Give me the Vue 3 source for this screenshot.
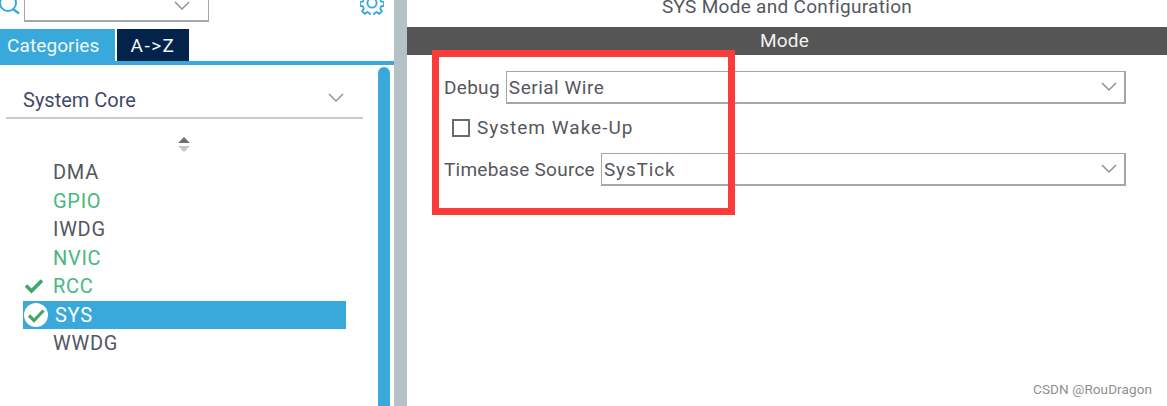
<template>
  <div class="page">
    <aside class="side">
      <div class="search-row">
        <svg class="search-icon" width="21" height="15" viewBox="0 0 21 15">
          <circle cx="8" cy="3" r="8" fill="none" stroke="#39a9dc" stroke-width="2" />
          <path d="M13 9l6 4.5" stroke="#39a9dc" stroke-width="2.400" fill="none" />
        </svg>
        <div class="search-box">
          <svg width="16" height="10" viewBox="0 0 16 10"><path d="M1 1l7 7 7-7" fill="none" stroke="#8d9296" stroke-width="1.500" /></svg>
        </div>
        <svg class="gear" width="24" height="24" viewBox="0 0 26 26">
          <circle cx="13" cy="13" r="5" fill="none" stroke="#39a9dc" stroke-width="2" />
          <path d="M11 2h4l.7 3.200 2.400 1 2.800-1.800 2.800 2.800-1.800 2.800 1 2.400 3.100.6v4l-3.100.7-1 2.400 1.800 2.800-2.800 2.800-2.800-1.800-2.400 1-.7 3.100h-4l-.7-3.100-2.400-1-2.800 1.800-2.800-2.800 1.800-2.800-1-2.400-3.100-.7v-4l3.100-.6 1-2.400-1.800-2.800 2.800-2.800 2.800 1.800 2.400-1z" transform="translate(0 -1)" fill="none" stroke="#39a9dc" stroke-width="2" />
        </svg>
      </div>
      <div class="tabs">
        <div class="tab active">Categories</div>
        <div class="tab dark">A-&gt;Z</div>
      </div>
      <div class="side-body">
        <div class="tree">
          <div class="group">
            <span>System Core</span>
            <svg width="16" height="10" viewBox="0 0 16 10"><path d="M1 1l7 7 7-7" fill="none" stroke="#8d9296" stroke-width="1.500" /></svg>
          </div>
          <div class="sorter">
            <svg width="14" height="16" viewBox="0 0 14 16">
              <path d="M7 0l6 6H1z" fill="#6f7173" />
              <path d="M1 9h12l-6 6z" fill="#c4c6c8" />
            </svg>
          </div>
          <ul class="items">
            <li
              v-for="item in items"
              :key="item.name"
              :class="['item', item.state]"
            >
              <span class="mark">
                <svg v-if="item.state === 'done'" width="20" height="16" viewBox="0 0 20 16">
                  <path d="M3 7.500l5.500 5.500L19 2.500" fill="none" stroke="#3fa767" stroke-width="3.600" />
                </svg>
                <svg v-if="item.state === 'selected'" width="26" height="26" viewBox="0 0 26 26">
                  <circle cx="13" cy="13" r="12" fill="#fff" />
                  <path d="M6 13.500l5 5L20.500 8.500" fill="none" stroke="#3fa767" stroke-width="3.200" />
                </svg>
              </span>
              <span>{{ item.name }}</span>
            </li>
          </ul>
        </div>
        <div class="scrollbar"></div>
      </div>
    </aside>
    <div class="splitter"></div>
    <main class="main">
      <div class="title">SYS Mode and Configuration</div>
      <div class="mode-bar">Mode</div>
      <div class="form">
        <div class="row debug-row">
          <label>Debug</label>
          <div class="select">
            <span>Serial Wire</span>
            <svg width="16" height="10" viewBox="0 0 16 10"><path d="M1 1l7 7 7-7" fill="none" stroke="#8d9296" stroke-width="1.500" /></svg>
          </div>
        </div>
        <div class="check-row">
          <span class="check"></span>
          <span class="wake">System Wake-Up</span>
        </div>
        <div class="row">
          <label class="timebase">Timebase Source</label>
          <div class="select">
            <span class="systick">SysTick</span>
            <svg width="16" height="10" viewBox="0 0 16 10"><path d="M1 1l7 7 7-7" fill="none" stroke="#8d9296" stroke-width="1.500" /></svg>
          </div>
        </div>
      </div>
      <div class="highlight"></div>
      <div class="watermark">CSDN @RouDragon</div>
    </main>
  </div>
</template>

<script setup>
const items = [
  { name: 'DMA', state: '' },
  { name: 'GPIO', state: 'ok' },
  { name: 'IWDG', state: '' },
  { name: 'NVIC', state: 'ok' },
  { name: 'RCC', state: 'done' },
  { name: 'SYS', state: 'selected' },
  { name: 'WWDG', state: '' }
]
</script>

<style>
html, body { margin: 0; background: #fff; }
</style>

<style scoped>
.page {
  display: flex;
  width: 1167px;
  height: 406px;
  overflow: hidden;
  background: #fff;
  font-family: Roboto, "Liberation Sans", sans-serif;
  font-size: 19px;
  letter-spacing: 0.5px;
  color: #55575e;
}

.side {
  width: 394px;
  flex: none;
  display: flex;
  flex-direction: column;
}

.search-row {
  height: 29px;
  flex: none;
  display: flex;
  align-items: flex-start;
}

.search-icon {
  flex: none;
  margin-right: 3px;
}

.search-box {
  width: 185px;
  height: 22px;
  box-sizing: border-box;
  border: solid #a2a7aa;
  border-width: 0 1px 2px 1px;
  display: flex;
  justify-content: flex-end;
  padding-right: 18px;
}

.search-box svg {
  margin-top: 1px;
}

.gear {
  margin-left: 151px;
  margin-top: -9px;
}

.tabs {
  height: 32px;
  flex: none;
  display: flex;
  gap: 2px;
}

.tab {
  color: #f2f8fb;
  display: flex;
  align-items: center;
}

.tab.active {
  width: 115px;
  box-sizing: border-box;
  padding-left: 7px;
  letter-spacing: 0.1px;
  background: #39a9dc;
}

.tab.dark {
  width: 72px;
  justify-content: center;
  letter-spacing: 1.500px;
  background: #03234b;
}

.side-body {
  flex: 1;
  border-top: 4px solid #39a9dc;
  display: flex;
  min-height: 0;
}

.tree {
  width: 378px;
  flex: none;
  padding-left: 6px;
  box-sizing: border-box;
}

.group {
  width: 357px;
  height: 54px;
  box-sizing: border-box;
  padding: 23px 19px 0 17px;
  border-bottom: 2px solid #c5ccd0;
  display: flex;
  justify-content: space-between;
  align-items: flex-start;
  font-size: 20px;
  letter-spacing: 0;
  color: #3f4a6b;
}

.group svg {
  margin-top: 5px;
}

.sorter {
  display: flex;
  justify-content: center;
  width: 356px;
  margin-top: 18px;
  height: 16px;
}

.items {
  list-style: none;
  margin: 5px 0 0;
  padding: 0 0 0 17px;
  width: 323px;
}

.item {
  height: 28.500px;
  display: flex;
  align-items: center;
  font-size: 20px;
  letter-spacing: 0.7px;
}

.item.ok,
.item.done {
  color: #48b87e;
}

.item.selected {
  background: #39a9dc;
  color: #fff;
}

.mark {
  width: 30px;
  flex: none;
  display: flex;
  align-items: center;
}

.item.selected .mark {
  width: 32px;
}

.scrollbar {
  width: 12px;
  margin-top: 2px;
  background: #39a9dc;
  border-radius: 6px 6px 0 0;
}

.splitter {
  width: 13px;
  flex: none;
  background: #b6c1c7;
}

.main {
  flex: 1;
  position: relative;
  min-width: 0;
}

.title {
  height: 27px;
  box-sizing: border-box;
  line-height: 14px;
  text-align: center;
  letter-spacing: 0.3px;
}

.mode-bar {
  height: 28px;
  box-sizing: border-box;
  padding-right: 5px;
  background: #545554;
  color: #f2f2f2;
  text-align: center;
  line-height: 28px;
  letter-spacing: 0.2px;
}

.form {
  padding: 16px 41px 0 37px;
}

.row {
  display: flex;
  align-items: center;
  gap: 6px;
}

.debug-row {
  gap: 6px;
}

.debug-row label {
  letter-spacing: 0.3px;
}

.timebase {
  letter-spacing: 0.250px;
}

.systick {
  letter-spacing: 0.850px;
}

.select {
  flex: 1;
  height: 33px;
  box-sizing: border-box;
  border: solid #a2a7aa;
  border-width: 1px 2px 2px 1px;
  display: flex;
  align-items: center;
  justify-content: space-between;
  padding: 0 7px 0 2px;
}

.check-row {
  height: 49px;
  box-sizing: border-box;
  padding: 0 0 2px 8px;
  display: flex;
  align-items: center;
  gap: 7px;
}

.wake {
  letter-spacing: 1px;
}

.check {
  width: 18px;
  height: 18px;
  box-sizing: border-box;
  border: 2px solid #6a6a6a;
}

.highlight {
  position: absolute;
  left: 25px;
  top: 50px;
  width: 303px;
  height: 165px;
  box-sizing: border-box;
  border: 7px solid #fb3a3a;
}

.watermark {
  position: absolute;
  right: 15px;
  bottom: 9px;
  font-size: 13.500px;
  letter-spacing: 0.1px;
  color: #8f8f8f;
}
</style>
